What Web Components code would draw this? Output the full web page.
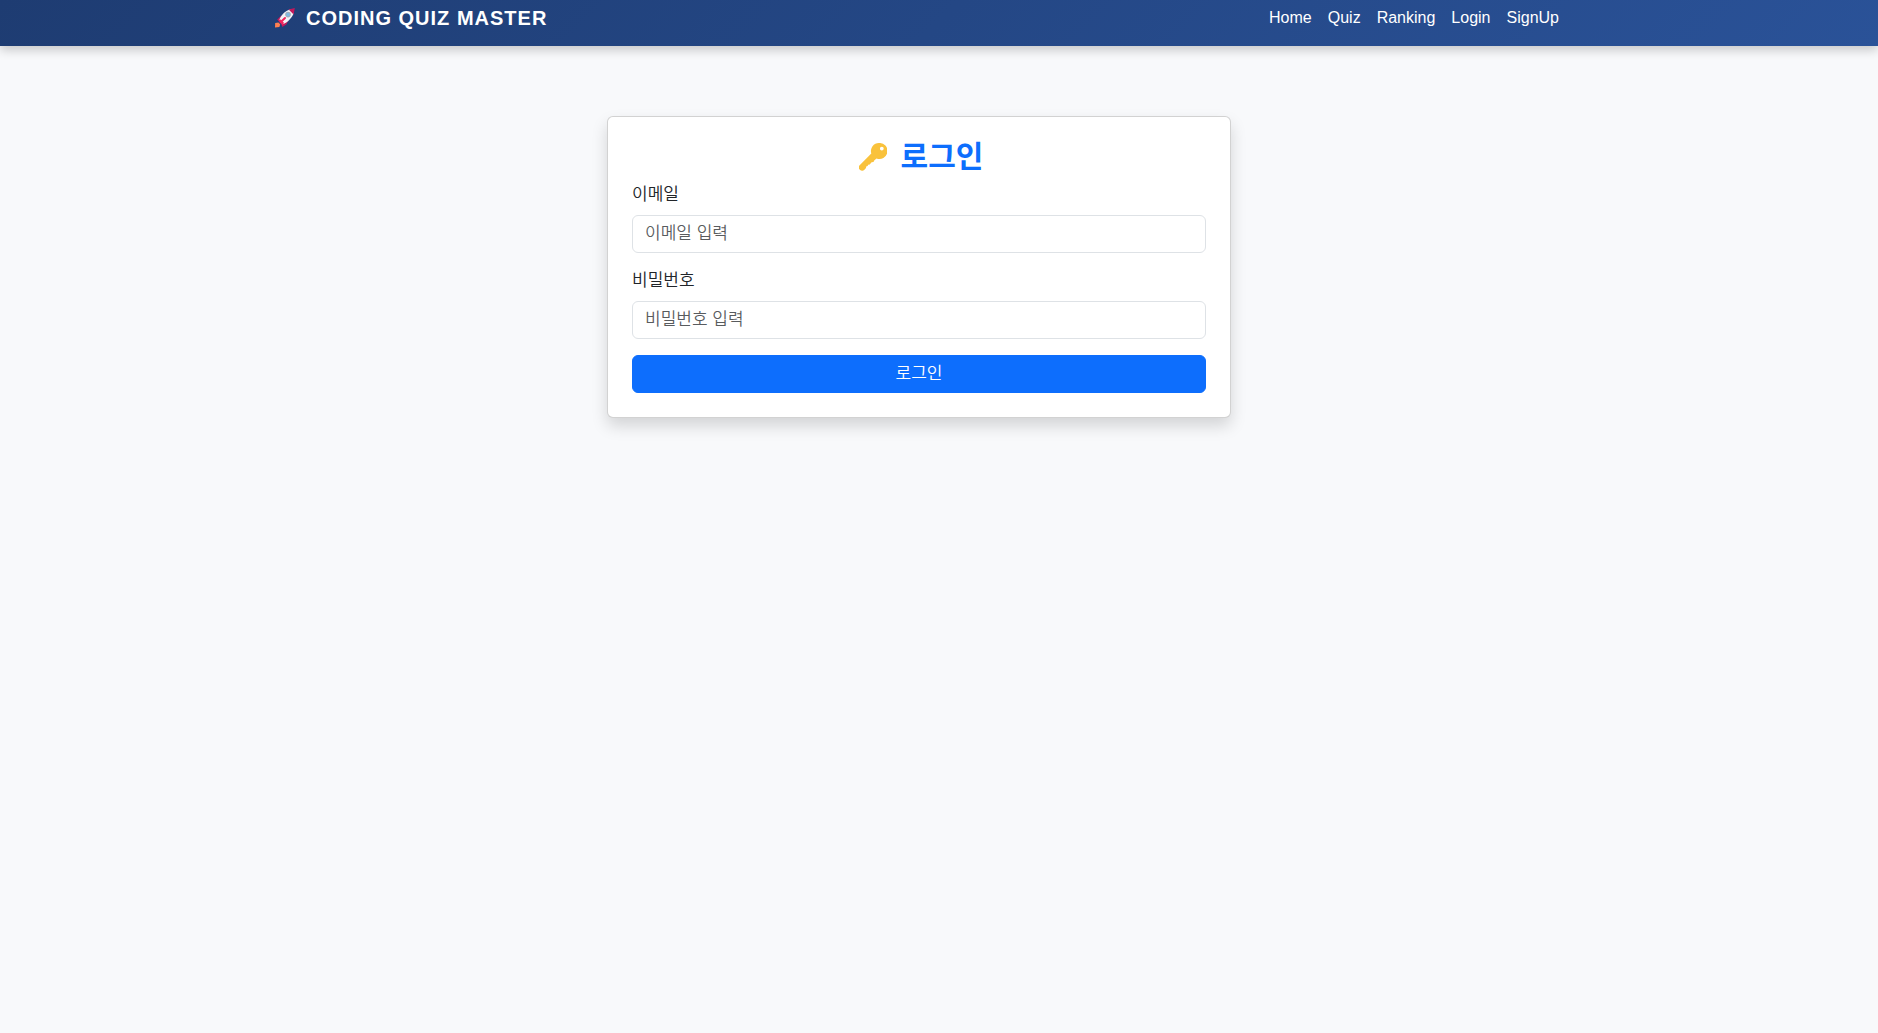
<!DOCTYPE html>
<html lang="ko">
<head>
<meta charset="utf-8">
<meta name="viewport" content="width=device-width, initial-scale=1">
<title>Coding Quiz Master</title>
<style>
  body {
    margin: 0;
    min-height: 100vh;
    background: #f8f9fb;
    color: #212529;
    font-family: "Liberation Sans", "Noto Sans CJK KR", sans-serif;
    font-size: 16px;
    line-height: 24px;
    --page-max: 1320px;
    --gutter: 12px;
    --page-end: 40px;
    --primary: #0d6efd;
  }
</style>
</head>
<body>
<site-header>
  <site-brand slot="brand" href="#home">CODING QUIZ MASTER</site-brand>
  <nav-item href="#home">Home</nav-item>
  <nav-item href="#quiz">Quiz</nav-item>
  <nav-item href="#ranking">Ranking</nav-item>
  <nav-item href="#login">Login</nav-item>
  <nav-item href="#signup">SignUp</nav-item>
</site-header>
<page-content>
  <login-card>
    <key-icon slot="icon"></key-icon>
    <span slot="title">로그인</span>
    <form-field label="이메일" type="email" placeholder="이메일 입력"></form-field>
    <form-field label="비밀번호" type="password" placeholder="비밀번호 입력"></form-field>
    <primary-button slot="action">로그인</primary-button>
  </login-card>
</page-content>

<script>
function define(name, render) {
  customElements.define(name, class extends HTMLElement {
    constructor() {
      super();
      this.attachShadow({ mode: "open" });
    }
    connectedCallback() {
      this.shadowRoot.innerHTML = "<style>*{box-sizing:border-box}</style>" + render(this);
    }
  });
}

define("site-header", () => `
  <style>
    :host { display: block; }
    header {
      padding: 0 var(--page-end) 10px 0;
      background: linear-gradient(135deg, #1e3c72, #2a5298);
      box-shadow: 0 4px 10px rgba(0,0,0,.2);
    }
    .bar {
      max-width: var(--page-max);
      margin: 0 auto;
      padding: 0 var(--gutter);
      display: flex;
      justify-content: space-between;
      align-items: flex-start;
    }
    nav { display: flex; padding-top: 6px; }
  </style>
  <header><div class="bar"><slot name="brand"></slot><nav><slot></slot></nav></div></header>`);

define("site-brand", el => `
  <style>
    :host { display: block; }
    a {
      display: flex; align-items: center; gap: 10px;
      height: 36px;
      color: #fff; text-decoration: none;
      font-size: 20px; font-weight: 700; letter-spacing: 1px;
    }
    rocket-icon { margin-left: 3px; }
  </style>
  <a href="${el.getAttribute("href")}"><rocket-icon></rocket-icon><span><slot></slot></span></a>`);

define("nav-item", el => `
  <style>
    :host { display: block; }
    a { display: block; padding: 0 8px; color: #fff; text-decoration: none; }
  </style>
  <a href="${el.getAttribute("href")}"><slot></slot></a>`);

define("rocket-icon", () => `
  <style>:host, svg { display: block; }</style>
  <svg width="22" height="22" viewBox="0 0 22 22" aria-hidden="true">
    <path d="M1.2 15.9 4.4 15.4 6.2 17.2 5.4 20 1 20.6z" fill="#ff7f50"/>
    <path d="M3.2 12.4 7.4 8.4 10 10 5.4 15z" fill="#c2185b"/>
    <path d="M7 16.4 12 11.6 13.8 14.2 12.6 17.2 8.4 20z" fill="#c2185b"/>
    <path d="M5.2 13.6C6.2 8.8 11.2 3.4 17.2 2L20 4.8C18.8 10.6 13.4 15.8 8.6 17.2z" fill="#f1f2f5"/>
    <path d="M14.6 2.6 20.8 1 19.6 7.4z" fill="#c2185b"/>
    <path d="M4.4 13.2 6.6 12.4 9.8 15.4 9 18.6z" fill="#f0245e"/>
    <path d="M6.6 15.2 11 11" stroke="#f0245e" stroke-width="2" stroke-linecap="round"/>
    <circle cx="14" cy="7.6" r="2.8" fill="#a3adb8"/>
    <circle cx="14" cy="7.6" r="1.9" fill="#7fb9e2"/>
  </svg>`);

define("page-content", () => `
  <style>
    :host { display: block; padding-right: var(--page-end); }
    main {
      max-width: var(--page-max);
      margin: 0 auto;
      padding: 70px var(--gutter) 48px;
      display: flex; justify-content: center;
    }
    .column { width: 50%; padding: 0 var(--gutter); }
    @media (max-width: 767px) { .column { width: 100%; } }
  </style>
  <main><div class="column"><slot></slot></div></main>`);

define("login-card", () => `
  <style>
    :host { display: block; }
    section {
      padding: 24px;
      background: #fff;
      border: 1px solid rgba(0,0,0,.175);
      border-radius: 6px;
      box-shadow: 0 8px 16px rgba(0,0,0,.15);
    }
    h3 {
      margin: 0 0 10px;
      display: flex; align-items: center; justify-content: center; gap: 14px;
      color: var(--primary);
      font-size: 30px; line-height: 32px; font-weight: 700;
    }
    form { display: flex; flex-direction: column; gap: 16px; }
  </style>
  <section>
    <h3><slot name="icon"></slot><slot name="title"></slot></h3>
    <form><slot></slot><slot name="action"></slot></form>
  </section>`);

define("key-icon", () => `
  <style>:host { display: block; padding-left: 4px; } svg { display: block; }</style>
  <svg width="28" height="28" viewBox="0 0 28 28" aria-hidden="true">
    <path fill-rule="evenodd" fill="#f9c23c" d="M20 0a8 8 0 0 0-7.7 10.4L.9 22a3.1 3.1 0 0 0 0 4.8 3.3 3.3 0 0 0 5-.5l1.1-1.4.2-1.5 1.4-.4.6-1.3 1.5-.1 1.9-2.3 1.9-.2.7-1.7 2.3-2A8 8 0 1 0 20 0zM22.8 3.7a1.9 1.9 0 1 1 0 3.8 1.9 1.9 0 0 1 0-3.8z"/>
  </svg>`);

define("form-field", el => `
  <style>
    :host { display: block; }
    label { display: block; margin-bottom: 8px; font-size: 17px; line-height: 24px; font-weight: 350; }
    input {
      display: block; width: 100%; height: 38px;
      padding: 6px 12px;
      border: 1px solid #dee2e6; border-radius: 6px;
      background: #fff; color: #212529;
      font: inherit; font-size: 17px; line-height: 24px; font-weight: 350;
      outline: none;
    }
    input:focus { border-color: #86b7fe; box-shadow: 0 0 0 4px rgba(13,110,253,.25); }
    input::placeholder { color: rgba(33,37,41,.75); opacity: 1; }
  </style>
  <label for="control">${el.getAttribute("label")}</label>
  <input id="control" type="${el.getAttribute("type")}" placeholder="${el.getAttribute("placeholder")}">`);

define("primary-button", () => `
  <style>
    :host { display: block; }
    button {
      display: block; width: 100%; height: 38px;
      padding: 6px 12px;
      border: 1px solid var(--primary); border-radius: 6px;
      background: var(--primary); color: #fff;
      font: inherit; font-size: 17px; line-height: 24px; font-weight: 350;
      cursor: pointer;
    }
    button:hover { background: #0b5ed7; }
  </style>
  <button type="submit"><slot></slot></button>`);
</script>
</body>
</html>
